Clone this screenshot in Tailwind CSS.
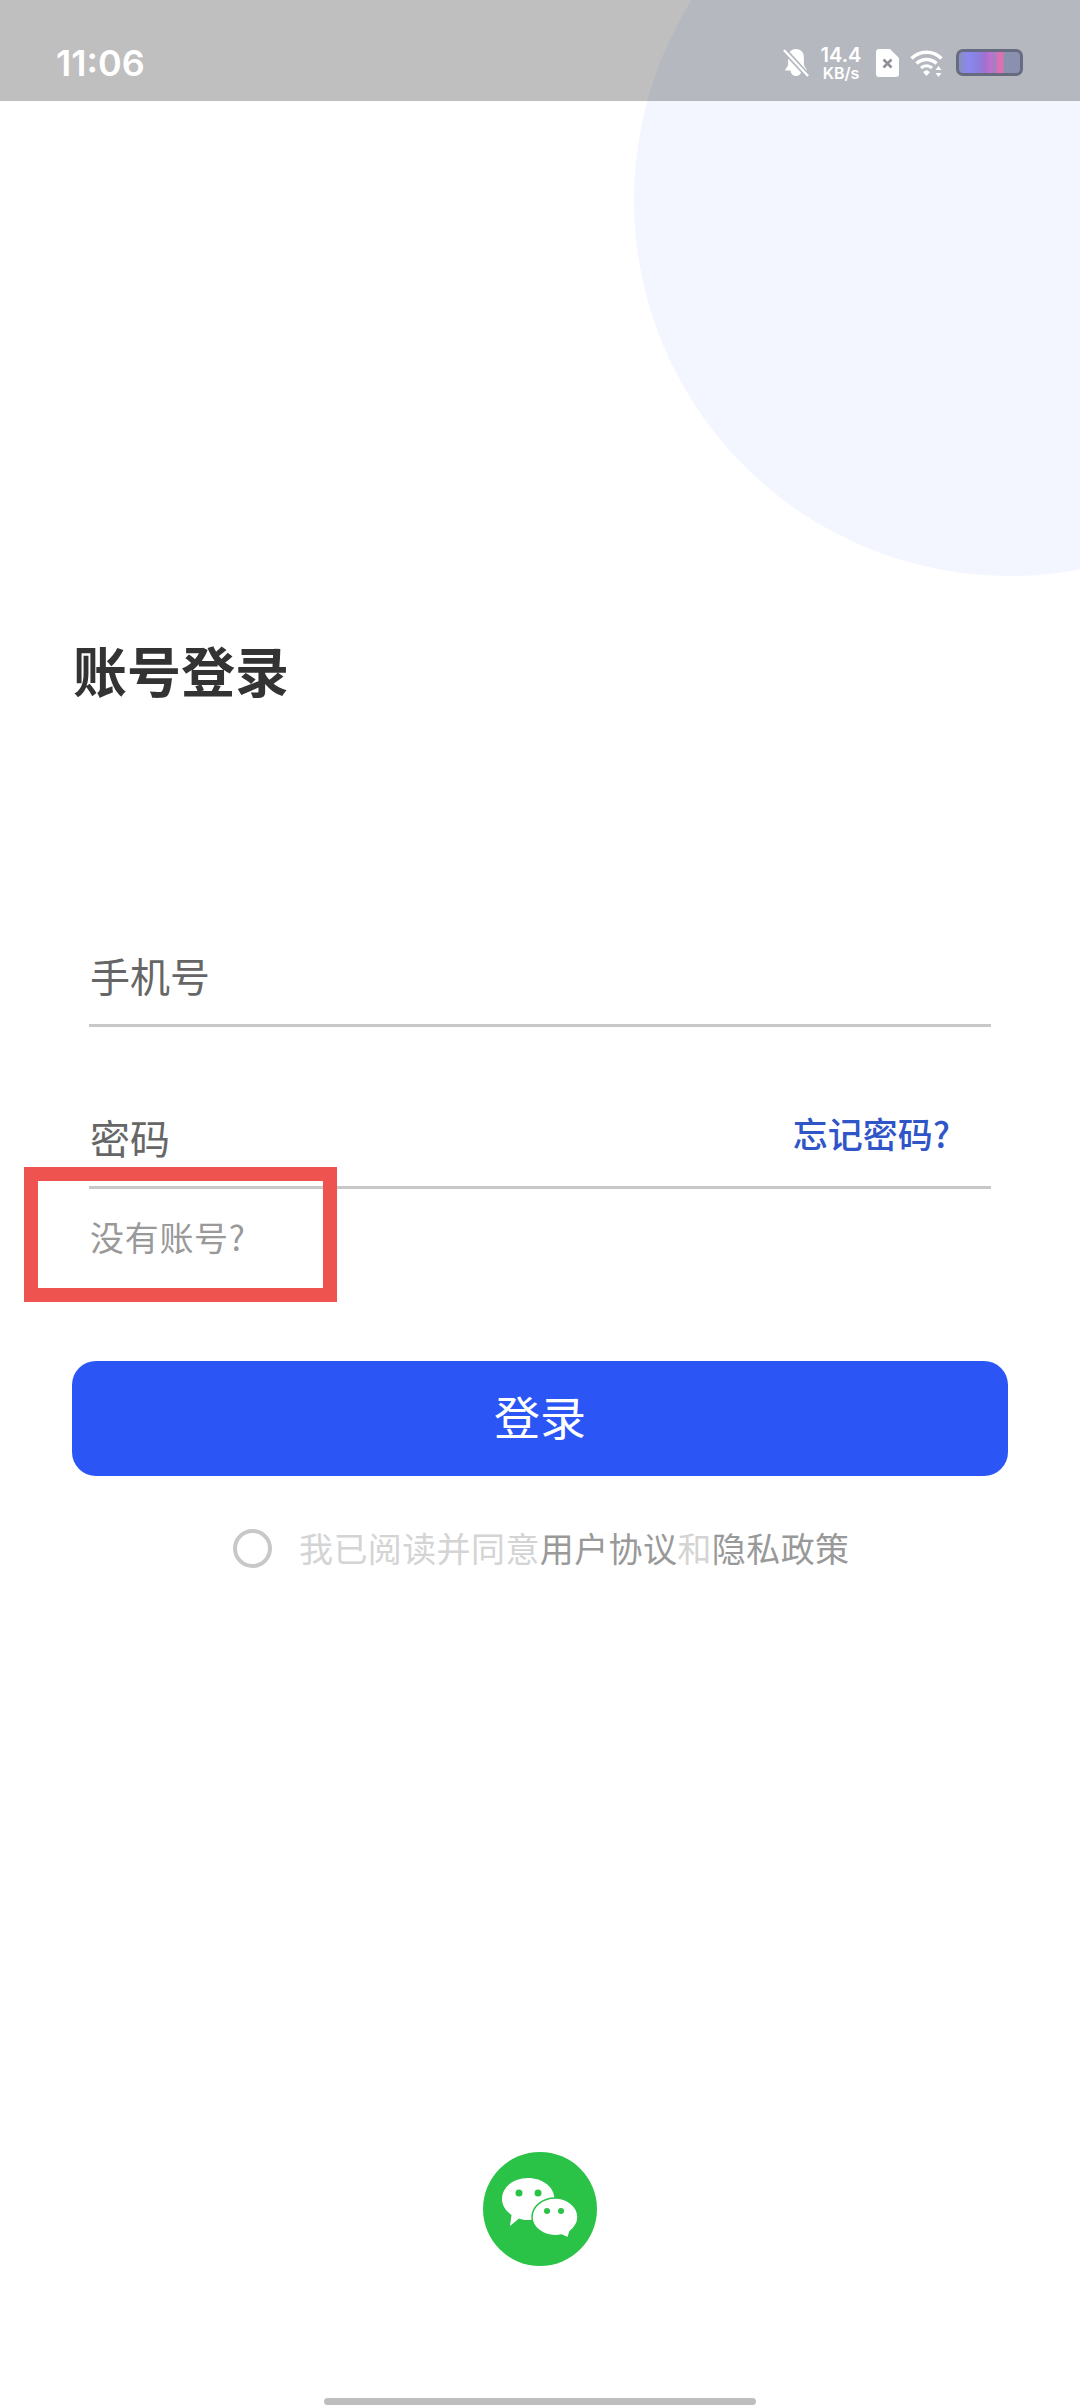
<!DOCTYPE html>
<html lang="zh-CN">
<head>
  <meta charset="UTF-8" />
  <meta name="viewport" content="width=device-width, initial-scale=1.0"/>
  <title>账号登录</title>
  <script src="https://cdn.jsdelivr.net/npm/@tailwindcss/browser@4"></script>
</head>
<body class="bg-white font-['Noto_Sans_CJK_SC','Noto_Sans',sans-serif] text-[#333]">
  <div class="relative w-[1080px] h-[2408px] overflow-hidden flex flex-col">
    <!-- 背景圆 -->
    <div class="absolute left-[634px] top-[-176px] w-[752px] h-[752px] rounded-full bg-[#f3f6ff]"></div>

    <!-- 状态栏 -->
    <div class="relative h-[101px] shrink-0 bg-black/25 flex items-center justify-between pl-[56px] pr-[57px] pt-[24px] text-white">
      <span class="font-['Inter',sans-serif] font-semibold text-[36px] leading-none">11:06</span>
      <div class="flex items-center">
        <svg class="w-[26px] h-[30px]" viewBox="0 0 28 32" fill="#fff">
          <path d="M14 1c5.500 0 8.500 4 8.500 9v8.500L26 24H20c-.5 4-3.200 6-6 6s-5.500-2-6-6H2l3.500-5.500V10C5.500 5 8.500 1 14 1z"/>
          <path d="M1 2l26 28" stroke="#b5b7bf" stroke-width="6"/>
          <path d="M1 2l26 28" stroke="#fff" stroke-width="2.500"/>
        </svg>
        <div class="ml-[9px] w-[46px] flex flex-col items-center font-['Inter',sans-serif] font-semibold">
          <span class="text-[20px] leading-[20px]">14.4</span>
          <span class="text-[16px] leading-[16px]">KB/s</span>
        </div>
        <svg class="ml-[12px] w-[23px] h-[28px]" viewBox="0 0 23 28">
          <path d="M3 0h11l9 9v16a3 3 0 0 1-3 3H3a3 3 0 0 1-3-3V3a3 3 0 0 1 3-3z" fill="#fff"/>
          <path d="M7.500 10.500l8 8M15.500 10.500l-8 8" stroke="#8f9198" stroke-width="2.500"/>
        </svg>
        <svg class="ml-[11px] w-[35px] h-[28px]" viewBox="0 0 35 28" fill="none">
          <path d="M1.500 9.500C9.500 1 23.500 1 31.500 9.500" stroke="#fff" stroke-width="3.500"/>
          <path d="M6.500 14.500C12 9 21 9 26.500 14.500" stroke="#fff" stroke-width="3.500"/>
          <path d="M11 19c3-3 8-3 11 0" stroke="#fff" stroke-width="3.200"/>
          <path d="M13 23l3.500-2 3.500 2-3.500 4z" fill="#fff"/>
          <path d="M28.500 17l3 4h-6zM28.500 28l3-4h-6z" fill="#fff"/>
        </svg>
        <div class="ml-[11px] w-[67px] h-[27px] rounded-[7px] border-[3px] border-[#666b80] bg-[linear-gradient(90deg,#8890b8_0%,#8a88f0_14%,#8a80e0_30%,#a070d0_42%,#c070d0_52%,#a080c0_58%,#d870b8_64%,#e070a8_72%,#8a90b0_74%,#8a90b0_100%)]"></div>
      </div>
    </div>

    <!-- 본문 -->
    <main class="relative flex-1 flex flex-col">
      <h1 class="ml-[73px] mt-[531px] text-[54px] leading-[76px] font-bold">账号登录</h1>

      <div class="mt-[238px] mx-[89px] h-[81px] border-b-[3px] border-[#c8c8c8] flex items-start">
        <span class="ml-[1px] text-[40px] leading-[58px] text-[#666]">手机号</span>
      </div>
      <div class="mt-[81px] mx-[89px] h-[81px] border-b-[3px] border-[#c8c8c8] flex items-start justify-between">
        <span class="ml-[1px] text-[40px] leading-[58px] text-[#666]">密码</span>
        <a class="mr-[41px] mt-[-4px] text-[35px] leading-[58px] font-medium text-[#2f55c8]">忘记密码?</a>
      </div>
      <div class="ml-[90px] mt-[29px] text-[34px] leading-[38px] tracking-[0.7px] text-[#999]">没有账号?</div>

      <button class="mt-[105px] mx-[72px] h-[115px] pb-[6px] rounded-[24px] bg-[#2b56f5] text-white text-[46px]">登录</button>

      <div class="mt-[48px] ml-[233px] flex items-center">
        <span class="w-[39px] h-[39px] rounded-full border-[4px] border-[#c8c8c8]"></span>
        <p class="ml-[27px] text-[34px] leading-[48px] tracking-[0.4px] text-[#d4d4d4]">我已阅读并同意<span class="text-[#999]">用户协议</span>和<span class="text-[#999]">隐私政策</span></p>
      </div>

      <div class="mt-auto mb-[142px] self-center w-[114px] h-[114px] rounded-full bg-[#2bc248] flex items-center justify-center">
        <svg class="w-[76px] h-[62px]" viewBox="0 0 76 62">
          <path d="M26 0c14.500 0 26.500 9 26.500 21S40.500 42 26 42c-3.500 0-6-.5-9-1.500L8 48l1.500-11C4 33 0 27.500 0 21 0 9 11.500 0 26 0z" fill="#fff"/>
          <circle cx="17" cy="15" r="3.500" fill="#2bc248"/>
          <circle cx="36" cy="15" r="3.500" fill="#2bc248"/>
          <path d="M53 20c12.500 0 23 8.500 23 19 0 6-3 10.500-8 14.500l-2 6.500-6.500-3c-2 .5-4 .7-6.500.7-12.500 0-23-8.500-23-18.700S40.500 20 53 20z" fill="#fff" stroke="#2bc248" stroke-width="1.500"/>
          <circle cx="45" cy="33" r="3" fill="#2bc248"/>
          <circle cx="59" cy="33" r="3" fill="#2bc248"/>
        </svg>
      </div>

      <div class="absolute left-[324px] top-[2297px] w-[432px] h-[7px] rounded-full bg-[#bebebe]"></div>
    </main>

    <!-- 빨간 표시 상자 -->
    <div class="absolute left-[24px] top-[1167px] w-[313px] h-[135px] border-[14px] border-[#ef5350]"></div>
  </div>
</body>
</html>
